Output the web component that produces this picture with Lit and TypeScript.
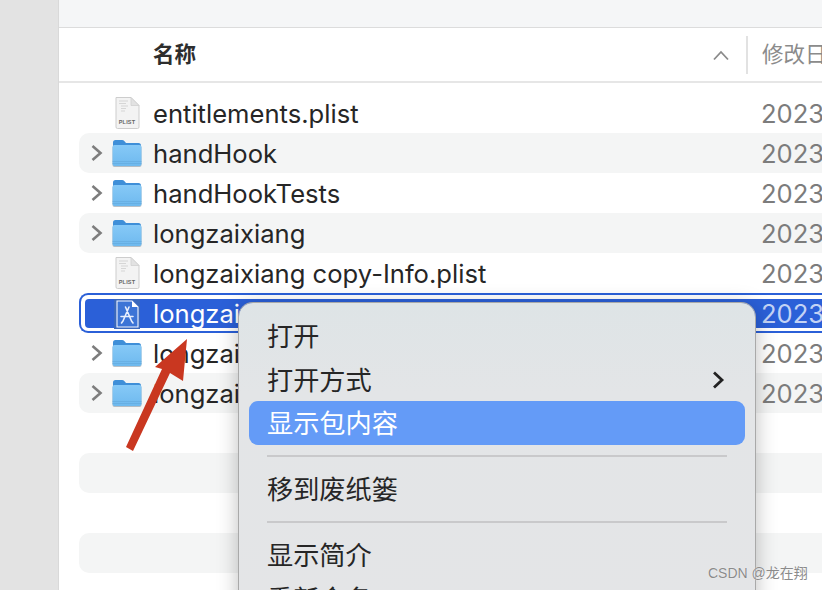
import { LitElement, html, css, svg } from "lit";
import { customElement } from "lit/decorators.js";

const folder = html`<svg class="icon" width="32" height="30" viewBox="0 0 32 30">
  <defs><linearGradient id="fb" x1="0" y1="0" x2="0" y2="1"><stop offset="0" stop-color="#86c9f7"/><stop offset="1" stop-color="#6eb9ee"/></linearGradient></defs>
  <path d="M2 6 V4.5 Q2 2 4.5 2 H11 Q12.5 2 13.5 3.2 L15 5 H27.5 Q30 5 30 7.5 V12 H2Z" fill="#3f8fd8"/>
  <rect x="1.5" y="7.5" width="29" height="21.5" rx="2" fill="#808e9a" opacity=".55"/>
  <rect x="1.5" y="7" width="29" height="21" rx="2" fill="url(#fb)"/>
  <path d="M1.5 23.5 H30.5 M1.5 25.5 H30.5" stroke="#5ea3d8" stroke-width=".7" opacity=".7"/>
</svg>`;

const plist = html`<svg class="icon" width="28" height="34" viewBox="0 0 28 34">
  <path d="M3 1.5 H18 L26 9.5 V31 Q26 32.5 24.5 32.5 H4.5 Q3 32.5 3 31Z" fill="#f3f3f3" stroke="#cdcdcd" stroke-width="1"/>
  <path d="M18 1.5 V9.5 H26Z" fill="#e2e2e2" stroke="#cdcdcd" stroke-width=".7"/>
  <path d="M6 5 H15 M6 7.5 H13 M8 10 H15 M8 12.5 H13 M8 15 H12" stroke="#d6d6d6" stroke-width="1.1"/>
</svg>`;

const app = html`<svg class="icon" width="28" height="32" viewBox="0 0 28 32">
  <rect x="1" y="1" width="26" height="30" fill="#3a68bd"/>
  <path d="M4 3 H19 L25 9 V29 H4Z" fill="#3c74d6" stroke="#f2f6ff" stroke-width="1.1"/>
  <path d="M19 3 V9 H25Z" fill="#fff"/>
  <path d="M12.5 9 L18.5 23 M16 9 L10 23 M8 18.5 H20 M10 23 L8.5 25 M18.5 23 L20 25" stroke="#e8effd" stroke-width="1.6" fill="none" stroke-linecap="round"/>
</svg>`;

const chevron = html`<svg class="chev" width="14" height="18" viewBox="0 0 14 18"><path d="M2.5 2 L10.5 9 L2.5 16" fill="none" stroke="#7d7d7d" stroke-width="2.6"/></svg>`;

type Row = { name?: string; icon?: "folder" | "plist" | "app"; sel?: boolean };
const rows: Row[] = [
  { name: "entitlements.plist", icon: "plist" },
  { name: "handHook", icon: "folder" },
  { name: "handHookTests", icon: "folder" },
  { name: "longzaixiang", icon: "folder" },
  { name: "longzaixiang copy-Info.plist", icon: "plist" },
  { name: "longzaixiang.app", icon: "app", sel: true },
  { name: "longzaixiang.xcodeproj", icon: "folder" },
  { name: "longzaixiangTests", icon: "folder" },
  {}, {}, {}, {}, {},
];

@customElement("app-root")
export class AppRoot extends LitElement {
  static styles = css`
    :host { display: block; width: 822px; height: 590px; position: relative; overflow: hidden; background: #fff;
      font-family: Inter, "Noto Sans CJK SC", sans-serif; color: #262626; }
    .page { display: flex; height: 590px; }
    .side { width: 58px; flex: none; background: #e3e3e3; }
    .main { flex: 1; min-width: 0; border-left: 1px solid #d9d9d9; background: #fff; display: flex; flex-direction: column; overflow: hidden; }
    .toolbar { height: 27px; flex: none; background: #f5f6f7; border-bottom: 1px solid #dcdcdc; }
    .head { height: 53px; flex: none; border-bottom: 2px solid #e6e6e6; display: flex; align-items: center; font-size: 22px; }
    .hname { margin-left: 94px; width: 559px; flex: none; font-weight: 700; font-family: "Noto Sans CJK SC", sans-serif; font-size: 21.5px; color: #2e2e2e; padding-bottom: 5px; }
    .sort { width: 34px; flex: none; display: flex; }
    .hdiv { width: 2px; height: 38px; background: #e2e2e2; flex: none; margin-right: 14px; }
    .hdate { color: #8b8b8b; white-space: nowrap; font-family: "Noto Sans CJK SC", sans-serif; font-size: 21.5px; padding-bottom: 5px; }
    .list { padding-top: 10px; display: flex; flex-direction: column; }
    .row { height: 40px; flex: none; margin-left: 20px; margin-right: -40px; display: flex; align-items: center; box-sizing: border-box; font-size: 25.6px; border-radius: 10px 0 0 10px; white-space: nowrap; }
    .row.alt { background: #f4f5f5; }
    .disc { width: 32px; flex: none; display: flex; justify-content: center; padding-left: 4px; box-sizing: border-box; }
    .iconbox { width: 32px; flex: none; display: flex; justify-content: center; margin-right: 10px; }
    .name { width: 608px; flex: none; }
    .date { color: #7c7c7c; }
    .row.sel { border: 2px solid #2b60d8; border-right: none; background: #fff; border-radius: 9px 0 0 9px; padding: 4px 0 3px 4px; align-items: stretch; }
    .fill { flex: 1; display: flex; align-items: center; background: #2b60d8; border-radius: 4px 0 0 4px; color: #fff; }
    .fill .disc { width: 26px; padding: 0; }
    .fill .date { color: #c3d3f5; }
    .plistbox { position: relative; display: flex; }
    .plabel { position: absolute; left: 0; right: 0; bottom: 4px; text-align: center; font-size: 5.5px; line-height: 7px; font-weight: 700; color: #666; letter-spacing: .2px; font-family: "Liberation Sans", sans-serif; }
    .menu { position: absolute; left: 239px; top: 303px; width: 516px; height: 320px; box-sizing: border-box; padding: 11px 10px; border-radius: 14px;
      background: linear-gradient(180deg, #dee4e6 0, #e3e5e7 90px, #e4e5e7 100%); box-shadow: 0 0 0 1px #a9a9a9, 0 4px 22px rgba(0,0,0,.28);
      font-family: "Noto Sans CJK SC", sans-serif; font-size: 26.2px; color: #262626; display: flex; flex-direction: column; }
    .item { height: 44px; flex: none; display: flex; align-items: center; justify-content: space-between; padding: 0 20px 3px 18px; box-sizing: border-box; border-radius: 9px; }
    .item svg { margin-top: 3px; }
    .item.hi { background: #649bf7; color: #fff; margin-top: -1px; }
    .sep { height: 2px; flex: none; background: #c9c9cb; margin: 10px 18px; }
    .arrow { position: absolute; left: 0; top: 0; pointer-events: none; }
    .mark { position: absolute; left: 708px; top: 562px; font-size: 14px; font-family: "Liberation Sans", "Noto Sans CJK SC", sans-serif; color: #8b8b8b; text-shadow: 0 0 1px #fff; white-space: nowrap; }
  `;

  private iconOf(r: Row) {
    if (r.icon === "folder") return folder;
    if (r.icon === "app") return app;
    return html`<span class="plistbox">${plist}<span class="plabel">PLIST</span></span>`;
  }

  render() {
    return html`
      <div class="page">
        <div class="side"></div>
        <div class="main">
          <div class="toolbar"></div>
          <div class="head">
            <div class="hname">名称</div>
            <div class="sort"><svg width="18" height="12" viewBox="0 0 18 12"><path d="M2 10.5 L9 3 L16 10.5" fill="none" stroke="#8a8a8a" stroke-width="1.8"/></svg></div>
            <div class="hdiv"></div>
            <div class="hdate">修改日期</div>
          </div>
          <div class="list">
            ${rows.map((r, i) => {
              const cls = `row ${i % 2 ? "alt" : ""} ${r.sel ? "sel" : ""}`;
              if (!r.name) return html`<div class=${cls}></div>`;
              const body = html`
                <div class="disc">${r.icon === "folder" ? chevron : ""}</div>
                <div class="iconbox">${this.iconOf(r)}</div>
                <div class="name">${r.name}</div>
                <div class="date">2023/3/1</div>`;
              return r.sel ? html`<div class=${cls}><div class="fill">${body}</div></div>` : html`<div class=${cls}>${body}</div>`;
            })}
          </div>
        </div>
      </div>
      <div class="menu">
        <div class="item">打开</div>
        <div class="item">打开方式<svg width="14" height="20" viewBox="0 0 14 20"><path d="M3 2.5 L11 10 L3 17.5" fill="none" stroke="#222" stroke-width="2.8"/></svg></div>
        <div class="item hi">显示包内容</div>
        <div class="sep"></div>
        <div class="item">移到废纸篓</div>
        <div class="sep"></div>
        <div class="item">显示简介</div>
        <div class="item">重新命名</div>
      </div>
      <svg class="arrow" width="822" height="590" viewBox="0 0 822 590">
        ${svg`<polygon points="187,339 183,381 170,373 133,451 126,447 162,369 155,367" fill="#c93720"/>`}
      </svg>
      <div class="mark">CSDN @龙在翔</div>
    `;
  }
}
